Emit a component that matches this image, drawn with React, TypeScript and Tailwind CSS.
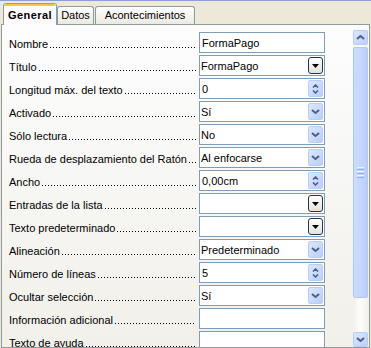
import React from "react";

type Kind = "edit" | "list" | "spin" | "combo";
const rows: { label: string; value: string; kind: Kind }[] = [
  { label: "Nombre", value: "FormaPago", kind: "edit" },
  { label: "Título", value: "FormaPago", kind: "combo" },
  { label: "Longitud máx. del texto", value: "0", kind: "spin" },
  { label: "Activado", value: "Sí", kind: "list" },
  { label: "Sólo lectura", value: "No", kind: "list" },
  { label: "Rueda de desplazamiento del Ratón", value: "Al enfocarse", kind: "list" },
  { label: "Ancho", value: "0,00cm", kind: "spin" },
  { label: "Entradas de la lista", value: "", kind: "combo" },
  { label: "Texto predeterminado", value: "", kind: "combo" },
  { label: "Alineación", value: "Predeterminado", kind: "list" },
  { label: "Número de líneas", value: "5", kind: "spin" },
  { label: "Ocultar selección", value: "Sí", kind: "list" },
  { label: "Información adicional", value: "", kind: "edit" },
  { label: "Texto de ayuda", value: "", kind: "edit" },
];

function BlueBtn({ children }: { children: React.ReactNode }) {
  return (
    <div className="absolute right-[1px] top-[1px] w-[15px] h-[17px] rounded-[2px] border border-[#b9cdf9] bg-gradient-to-br from-[#dde8ff] to-[#b9cef9] flex flex-col items-center justify-center">
      {children}
    </div>
  );
}

function Chevron({ up = false, small = false }: { up?: boolean; small?: boolean }) {
  const w = small ? 7 : 9;
  const h = small ? 4 : 5;
  return (
    <svg width={w} height={h} viewBox={`0 0 ${w} ${h}`}>
      <path
        d={
          small
            ? up
              ? "M1 3.5 L3.5 1 L6 3.5"
              : "M1 0.5 L3.5 3 L6 0.5"
            : up
            ? "M1 4 L4.5 1 L8 4"
            : "M1 1 L4.5 4 L8 1"
        }
        fill="none"
        stroke="#4d6185"
        strokeWidth={small ? 1.6 : 2}
      />
    </svg>
  );
}

function Field({ value, kind }: { value: string; kind: Kind }) {
  const pad = kind === "edit" ? "pl-[2px] pr-[2px]" : kind === "spin" ? "pl-[2px] pr-[18px]" : "pl-[1px] pr-[18px]";
  return (
    <div className="relative w-[126px] h-[21px] border border-[#7f9db9] bg-white shrink-0">
      <div className={`h-full flex items-center pt-[1px] ${pad} text-[11px] text-black whitespace-nowrap overflow-hidden`}>{value}</div>
      {kind === "list" && (
        <BlueBtn>
          <Chevron />
        </BlueBtn>
      )}
      {kind === "spin" && (
        <BlueBtn>
          <div className="flex flex-col items-center gap-[2px]">
            <Chevron up small />
            <Chevron small />
          </div>
        </BlueBtn>
      )}
      {kind === "combo" && (
        <div className="absolute right-[1px] top-[1px] w-[15px] h-[17px] rounded-[3px] border border-[#1e3557] bg-gradient-to-b from-[#ffffff] to-[#e4e2da] flex items-center justify-center">
          <svg width="7" height="4" viewBox="0 0 7 4">
            <path d="M0 0 L7 0 L3.5 4 Z" fill="#000" />
          </svg>
        </div>
      )}
    </div>
  );
}

export default function App() {
  return (
    <div
      className="w-[371px] h-[348px] overflow-hidden bg-[#ece9d8] flex flex-col"
      style={{ fontFamily: '"Liberation Sans", Arial, sans-serif' }}
    >
      <div className="h-px bg-[#8e9fd6] shrink-0" />
      {/* tabs */}
      <div className="h-[23px] flex items-end pl-[3px] shrink-0">
        <div className="relative z-10 w-[54px] h-[22px] -mb-px rounded-t-[3px] overflow-hidden border-l border-r border-[#919b9c] bg-[#fcfcfe] flex flex-col">
          <div className="h-px bg-[#e68b2c]" />
          <div className="h-[2px] bg-[#ffc73c]" />
          <div className="flex-1 flex items-center justify-center text-[11px] font-bold tracking-[0.4px] text-black pb-px">General</div>
        </div>
        <div className="w-[37px] h-[18px] rounded-t-[3px] border border-b-0 border-[#919b9c] bg-gradient-to-b from-[#ffffff] to-[#ebe9e1] flex items-center justify-center text-[11px] text-black">
          Datos
        </div>
        <div className="ml-px w-[100px] h-[18px] rounded-t-[3px] border border-b-0 border-[#919b9c] bg-gradient-to-b from-[#ffffff] to-[#ebe9e1] flex items-center justify-center text-[11px] text-black">
          Acontecimientos
        </div>
      </div>
      {/* panel */}
      <div className="mx-px flex-1 border border-[#919b9c] bg-gradient-to-b from-[#fdfdfe] to-[#f1f0ea] flex overflow-hidden">
        <div className="flex-1 pt-[7px] pl-[7px] flex flex-col gap-[2px]">
          {rows.map((r) => (
            <div key={r.label} className="flex items-center h-[21px] shrink-0">
              <div className="w-[188px] flex items-end text-[11px] text-black whitespace-nowrap pt-[4px]">
                <span className="shrink-0">{r.label}</span>
                <span className="flex-1 h-px mb-[5px] ml-[2px] mr-px bg-[linear-gradient(to_right,#000_1px,transparent_1px)] bg-[length:3px_1px]" />
              </div>
              <div className="w-[2px] shrink-0" />
              <Field value={r.value} kind={r.kind} />
            </div>
          ))}
        </div>
        {/* scrollbar */}
        <div className="w-[15px] mr-px mt-[5px] h-[317px] shrink-0 bg-gradient-to-r from-[#f3f1ea] via-[#fdfdfa] to-[#f3f1ea] flex flex-col">
          <div className="h-[15px] rounded-[2px] border border-[#b6cbf8] bg-gradient-to-br from-[#dde8ff] to-[#bccffa] flex items-center justify-center">
            <Chevron up />
          </div>
          <div className="mt-[2px] h-[251px] rounded-[2px] border border-[#b1c6f5] bg-gradient-to-r from-[#cddcfd] via-[#c6d6fd] to-[#b9cdf8] flex items-center justify-center">
            <div className="flex flex-col gap-px">
              <div className="w-[7px] h-px bg-[#eef4fe]" />
              <div className="w-[7px] h-px bg-[#8cb0f8]" />
              <div className="w-[7px] h-px bg-[#eef4fe]" />
              <div className="w-[7px] h-px bg-[#8cb0f8]" />
              <div className="w-[7px] h-px bg-[#eef4fe]" />
              <div className="w-[7px] h-px bg-[#8cb0f8]" />
            </div>
          </div>
          <div className="flex-1" />
          <div className="h-[15px] rounded-[2px] border border-[#b6cbf8] bg-gradient-to-br from-[#dde8ff] to-[#bccffa] flex items-center justify-center">
            <Chevron />
          </div>
        </div>
      </div>
    </div>
  );
}
